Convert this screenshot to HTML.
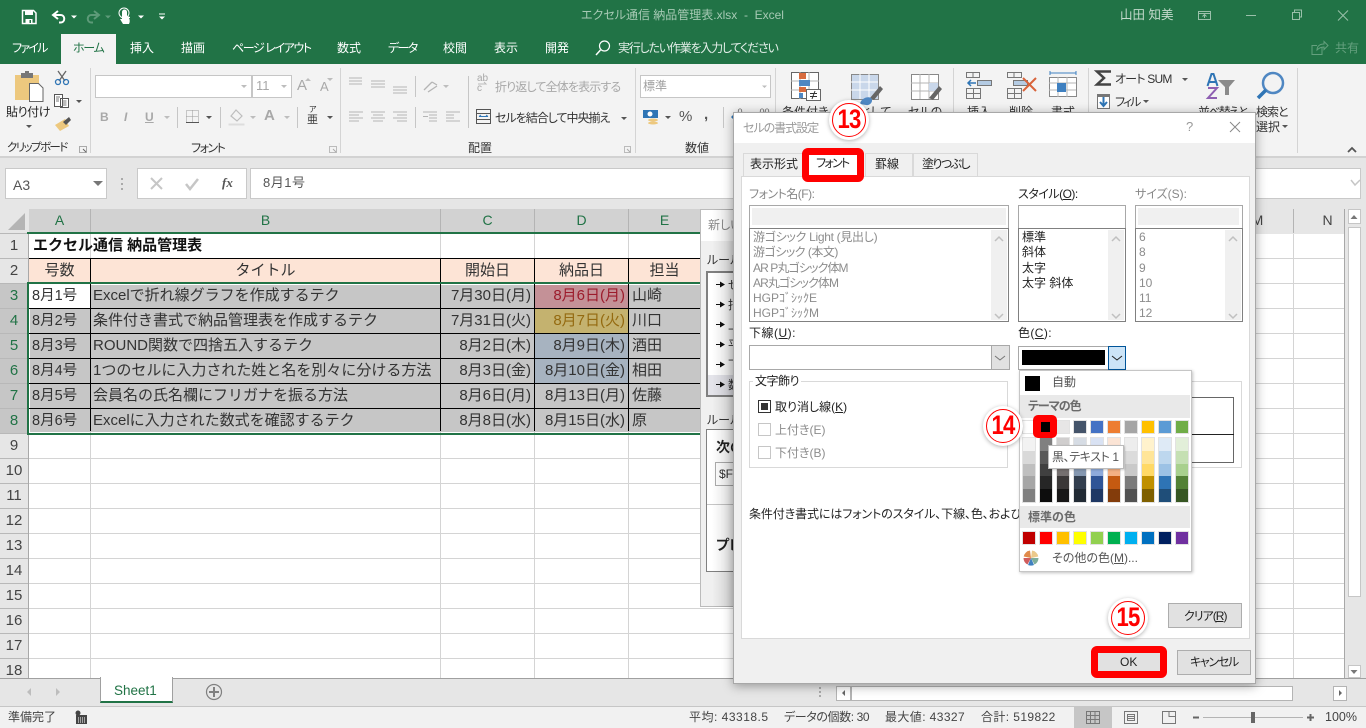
<!DOCTYPE html>
<html lang="ja"><head><meta charset="utf-8"><title>エクセル通信 納品管理表.xlsx - Excel</title>
<style>
*{box-sizing:border-box}
html,body{margin:0;padding:0;width:1366px;height:728px;overflow:hidden;background:#e6e6e6}
body{position:relative;font-family:"Liberation Sans","Noto Sans CJK JP",sans-serif;font-size:12px;color:#333;font-feature-settings:"palt"}
.a{position:absolute}
.t{position:absolute;white-space:nowrap;line-height:16px;height:16px}
.c{position:absolute;white-space:nowrap;line-height:24px;height:24px;font-size:15px;color:#333;font-feature-settings:normal}
.r{text-align:right}
.w{color:#fff}
.g{color:#8c8c8c}
.rn{position:absolute;left:0;width:28px;height:24px;line-height:24px;text-align:center;font-size:15px;color:#444;background:#e6e6e6}
.rs{background:#c6c6c6;color:#217346}
.ch{position:absolute;top:209px;height:24px;line-height:23px;text-align:center;font-size:14px;background:#d2d2d2;color:#217346;border-right:1px solid #b4b4b4}
.hl{position:absolute;background:#000;height:1px}
.vl{position:absolute;background:#000;width:1px}
.gv{position:absolute;width:1px;background:#d4d4d4}
.pal b{display:block;position:absolute;top:68px;width:12px;height:64px;outline:1px solid #e2e2e2}
.pal i{display:block;height:12.8px}
.pal u{display:block;position:absolute;width:12px;height:12px;outline:1px solid #e2e2e2}
.bd{position:absolute;width:34px;height:34px;border-radius:50%;border:1.5px solid #f00;color:#f00;font-weight:bold;font-size:27px;line-height:30px;text-align:center;letter-spacing:-1px}
.bd span{display:inline-block;transform:scaleX(.82)}
</style></head><body>

<!-- title bar + tabs -->
<div class="a" style="left:0;top:0;width:1366px;height:64px;background:#217346"></div>
<div class="a" style="left:61px;top:34px;width:55px;height:30px;background:#f3f3f3"></div>
<div class="t" style="left:581px;top:7px;font-size:12px;color:#a6c9b4">エクセル通信 納品管理表.xlsx&nbsp; -&nbsp; Excel</div>
<div class="t" style="left:1120px;top:7px;font-size:12.500px;color:#c3dacc">山田 知美</div>
<div class="t w" style="left:12px;top:40px;letter-spacing:-1.700px">ファイル</div>
<div class="t" style="left:73px;top:40px;color:#217346;letter-spacing:-1.300px">ホーム</div>
<div class="t w" style="left:130px;top:40px">挿入</div>
<div class="t w" style="left:181px;top:40px">描画</div>
<div class="t w" style="left:232px;top:40px;letter-spacing:-1.400px">ページ レイアウト</div>
<div class="t w" style="left:337px;top:40px">数式</div>
<div class="t w" style="left:388px;top:40px;letter-spacing:-1.600px">データ</div>
<div class="t w" style="left:443px;top:40px">校閲</div>
<div class="t w" style="left:494px;top:40px">表示</div>
<div class="t w" style="left:545px;top:40px">開発</div>
<div class="t" style="left:618px;top:40px;color:#e3eee8;letter-spacing:-1.200px">実行したい作業を入力してください</div>
<div class="t" style="left:1335px;top:40px;color:#64a07e">共有</div>

<!-- ribbon -->
<div class="a" style="left:0;top:64px;width:1366px;height:94px;background:#f3f3f3;border-bottom:2px solid #d2d2d2"></div>
<div class="a" style="left:95px;top:75px;width:157px;height:23px;background:#fff;border:1px solid #c6c6c6"></div>
<div class="a" style="left:252px;top:75px;width:40px;height:23px;background:#fff;border:1px solid #c6c6c6"></div>
<div class="t" style="left:256px;top:78px;color:#a8a8a8;font-size:13px">11</div>
<div class="a" style="left:640px;top:75px;width:131px;height:23px;background:#fff;border:1px solid #c6c6c6"></div>
<div class="t" style="left:643px;top:78px;color:#a0a0a0;font-size:12px">標準</div>
<div class="t" style="left:6px;top:104px;color:#222;font-size:12px;letter-spacing:-.4px">貼り付け</div>
<div class="t" style="left:7px;top:140px;color:#333;font-size:11.500px;letter-spacing:-1.600px">クリップボード</div>
<div class="t" style="left:191px;top:140px;color:#333;letter-spacing:-1.500px">フォント</div>
<div class="t" style="left:468px;top:140px;color:#333">配置</div>
<div class="t" style="left:685px;top:140px;color:#333">数値</div>
<div class="t" style="left:495px;top:79px;color:#a8a8a8;letter-spacing:-.850px">折り返して全体を表示する</div>
<div class="t" style="left:495px;top:110px;color:#333;letter-spacing:-1px">セルを結合して中央揃え</div>
<div class="t" style="left:782px;top:104px;color:#333">条件付き</div>
<div class="t" style="left:860px;top:104px;color:#333">として</div>
<div class="t" style="left:908px;top:104px;color:#333">セルの</div>
<div class="t" style="left:967px;top:104px;color:#333">挿入</div>
<div class="t" style="left:1009px;top:104px;color:#333">削除</div>
<div class="t" style="left:1051px;top:104px;color:#333">書式</div>
<div class="t" style="left:1115px;top:71px;color:#333;letter-spacing:-.800px">オート SUM</div>
<div class="t" style="left:1115px;top:94px;color:#333;letter-spacing:-2px">フィル</div>
<div class="t" style="left:1198px;top:104px;color:#333;letter-spacing:-1.800px">並べ替えと</div>
<div class="t" style="left:1256px;top:104px;color:#333;letter-spacing:-1px">検索と</div>
<div class="t" style="left:1256px;top:119px;color:#333">選択</div>
<div class="t" style="left:679px;top:109px;color:#555;font-size:15px">%</div>
<div class="t" style="left:704px;top:107px;color:#555;font-size:15px;font-weight:bold">,</div>
<div class="t" style="left:100px;top:109px;color:#a8a8a8;font-size:12px;font-weight:bold">B</div>
<div class="t" style="left:124px;top:109px;color:#a8a8a8;font-size:12px;font-style:italic;font-weight:bold">I</div>
<div class="t" style="left:145px;top:109px;color:#a8a8a8;font-size:12px;font-weight:bold;text-decoration:underline">U</div>
<div class="t" style="left:264px;top:108px;color:#a8a8a8;font-size:15px;font-weight:bold">A</div>
<div class="t" style="left:297px;top:78px;color:#a8a8a8;font-size:15px">A</div>
<div class="t" style="left:320px;top:79px;color:#a8a8a8;font-size:13px">A</div>
<div class="t" style="left:309px;top:106px;color:#333;font-size:8px;line-height:8px">ア</div>
<div class="t" style="left:307px;top:114px;color:#333;font-size:11px;line-height:12px">亜</div>
<div class="t" style="left:477px;top:74px;color:#a8a8a8;font-size:10px;line-height:10px">ab</div>
<div class="t" style="left:477px;top:84px;color:#a8a8a8;font-size:10px;line-height:10px">c</div>
<div class="t" style="left:735px;top:104px;color:#666;font-size:9px">.0</div>
<div class="t" style="left:757px;top:104px;color:#666;font-size:9px">.00</div>

<!-- formula bar -->
<div class="a" style="left:5px;top:168px;width:102px;height:31px;background:#fff;border:1px solid #c9c9c9"></div>
<div class="t" style="left:13px;top:177px;font-size:14px;color:#555">A3</div>
<div class="a" style="left:137px;top:168px;width:110px;height:31px;background:#fff;border:1px solid #c9c9c9"></div>
<div class="a" style="left:250px;top:168px;width:1111px;height:31px;background:#fff;border:1px solid #c9c9c9"></div>
<div class="t" style="left:263px;top:175px;font-size:13px;color:#555;font-feature-settings:normal;letter-spacing:.5px">8月1号</div>
<div class="t" style="left:222px;top:175px;font-size:13px;color:#555;font-family:'Liberation Serif',serif;font-style:italic;font-weight:bold">fx</div>

<!-- column headers -->
<div class="a" style="left:0;top:209px;width:29px;height:25px;background:#e6e6e6"></div>
<div class="ch" style="left:29px;width:62px">A</div>
<div class="ch" style="left:91px;width:350px">B</div>
<div class="ch" style="left:441px;width:94px">C</div>
<div class="ch" style="left:535px;width:94px">D</div>
<div class="ch" style="left:629px;width:72px">E</div>
<div class="ch" style="left:1222px;width:72px;background:#e6e6e6;color:#444">M</div>
<div class="ch" style="left:1294px;width:68px;background:#e6e6e6;color:#444">N</div>

<!-- row headers -->
<div class="rn" style="top:234px">1</div>
<div class="rn" style="top:259px">2</div>
<div class="rn rs" style="top:284px">3</div>
<div class="rn rs" style="top:309px">4</div>
<div class="rn rs" style="top:334px">5</div>
<div class="rn rs" style="top:359px">6</div>
<div class="rn rs" style="top:384px">7</div>
<div class="rn rs" style="top:409px">8</div>
<div class="rn" style="top:434px">9</div>
<div class="rn" style="top:459px">10</div>
<div class="rn" style="top:484px">11</div>
<div class="rn" style="top:509px">12</div>
<div class="rn" style="top:534px">13</div>
<div class="rn" style="top:559px">14</div>
<div class="rn" style="top:584px">15</div>
<div class="rn" style="top:609px">16</div>
<div class="rn" style="top:634px">17</div>
<div class="rn" style="top:659px">18</div>
<div class="a" style="left:0;top:233px;width:28px;height:445px;background:repeating-linear-gradient(to bottom,#b8b8b8 0,#b8b8b8 1px,transparent 1px,transparent 25px)"></div>

<!-- grid -->
<div class="a" style="left:28px;top:234px;width:1317px;height:444px;background:repeating-linear-gradient(to bottom,#fff 0,#fff 24px,#d4d4d4 24px,#d4d4d4 25px);border-left:1px solid #a8a8a8"></div>
<div class="gv" style="left:90px;top:234px;height:444px"></div>
<div class="gv" style="left:440px;top:234px;height:444px"></div>
<div class="gv" style="left:534px;top:234px;height:444px"></div>
<div class="gv" style="left:628px;top:234px;height:444px"></div>
<div class="gv" style="left:1293px;top:234px;height:444px"></div>
<div class="gv" style="left:1344px;top:209px;height:469px;background:#a8a8a8"></div>

<!-- header row + selection fills -->
<div class="a" style="left:29px;top:259px;width:672px;height:24px;background:#fde4d6"></div>
<div class="a" style="left:30px;top:285px;width:671px;height:147px;background:#c6c6c6"></div>
<div class="a" style="left:30px;top:285px;width:60px;height:23px;background:#fff"></div>
<div class="a" style="left:535px;top:285px;width:93px;height:23px;background:#c49197"></div>
<div class="a" style="left:535px;top:309px;width:93px;height:24px;background:#c4b26f"></div>
<div class="a" style="left:535px;top:334px;width:93px;height:49px;background:#a7b3c0"></div>
<div class="hl" style="left:29px;top:258px;width:672px"></div>
<div class="hl" style="left:29px;top:308px;width:672px"></div>
<div class="hl" style="left:29px;top:333px;width:672px"></div>
<div class="hl" style="left:29px;top:358px;width:672px"></div>
<div class="hl" style="left:29px;top:383px;width:672px"></div>
<div class="hl" style="left:29px;top:408px;width:672px"></div>
<div class="vl" style="left:90px;top:258px;height:173px"></div>
<div class="vl" style="left:440px;top:258px;height:173px"></div>
<div class="vl" style="left:534px;top:258px;height:173px"></div>
<div class="vl" style="left:628px;top:258px;height:173px"></div>
<div class="a" style="left:27px;top:232px;width:680px;height:2px;background:#217346"></div>
<div class="a" style="left:27px;top:282px;width:680px;height:2px;background:#217346"></div>
<div class="a" style="left:27px;top:433px;width:680px;height:2px;background:#217346"></div>
<div class="a" style="left:27px;top:282px;width:2px;height:153px;background:#217346"></div>

<!-- cell text -->
<div class="c" style="left:33px;top:234px;font-weight:bold;font-size:15px;color:#111">エクセル通信 納品管理表</div>
<div class="c" style="left:29px;width:61px;top:259px;text-align:center">号数</div>
<div class="c" style="left:91px;width:349px;top:259px;text-align:center">タイトル</div>
<div class="c" style="left:441px;width:93px;top:259px;text-align:center">開始日</div>
<div class="c" style="left:535px;width:93px;top:259px;text-align:center">納品日</div>
<div class="c" style="left:629px;width:71px;top:259px;text-align:center">担当</div>

<div class="c" style="left:32px;top:284px;font-size:14.500px">8月1号</div>
<div class="c" style="left:32px;top:309px;font-size:14.500px">8月2号</div>
<div class="c" style="left:32px;top:334px;font-size:14.500px">8月3号</div>
<div class="c" style="left:32px;top:359px;font-size:14.500px">8月4号</div>
<div class="c" style="left:32px;top:384px;font-size:14.500px">8月5号</div>
<div class="c" style="left:32px;top:409px;font-size:14.500px">8月6号</div>
<div class="c" style="left:93px;top:284px">Excelで折れ線グラフを作成するテク</div>
<div class="c" style="left:93px;top:309px">条件付き書式で納品管理表を作成するテク</div>
<div class="c" style="left:93px;top:334px">ROUND関数で四捨五入するテク</div>
<div class="c" style="left:93px;top:359px">1つのセルに入力された姓と名を別々に分ける方法</div>
<div class="c" style="left:93px;top:384px">会員名の氏名欄にフリガナを振る方法</div>
<div class="c" style="left:93px;top:409px">Excelに入力された数式を確認するテク</div>
<div class="c r" style="left:441px;width:90px;top:284px">7月30日(月)</div>
<div class="c r" style="left:441px;width:90px;top:309px">7月31日(火)</div>
<div class="c r" style="left:441px;width:90px;top:334px">8月2日(木)</div>
<div class="c r" style="left:441px;width:90px;top:359px">8月3日(金)</div>
<div class="c r" style="left:441px;width:90px;top:384px">8月6日(月)</div>
<div class="c r" style="left:441px;width:90px;top:409px">8月8日(水)</div>
<div class="c r" style="left:535px;width:90px;top:284px;color:#9c1c2c">8月6日(月)</div>
<div class="c r" style="left:535px;width:90px;top:309px;color:#946a10">8月7日(火)</div>
<div class="c r" style="left:535px;width:90px;top:334px">8月9日(木)</div>
<div class="c r" style="left:535px;width:90px;top:359px">8月10日(金)</div>
<div class="c r" style="left:535px;width:90px;top:384px">8月13日(月)</div>
<div class="c r" style="left:535px;width:90px;top:409px">8月15日(水)</div>
<div class="c" style="left:632px;top:284px">山崎</div>
<div class="c" style="left:632px;top:309px">川口</div>
<div class="c" style="left:632px;top:334px">酒田</div>
<div class="c" style="left:632px;top:359px">相田</div>
<div class="c" style="left:632px;top:384px">佐藤</div>
<div class="c" style="left:632px;top:409px">原</div>

<!-- vertical scrollbar -->
<div class="a" style="left:1345px;top:208px;width:21px;height:471px;background:#e6e6e6"></div>
<div class="a" style="left:1348px;top:227px;width:13px;height:370px;background:#fff;border:1px solid #c6c6c6"></div>
<div class="a" style="left:1348px;top:209px;width:13px;height:15px;background:#fff;border:1px solid #c6c6c6"></div>
<div class="a" style="left:1348px;top:665px;width:13px;height:13px;background:#fff;border:1px solid #c6c6c6"></div>

<!-- sheet tab bar -->
<div class="a" style="left:0;top:678px;width:1366px;height:29px;background:#e6e6e6;border-top:1px solid #a0a0a0"></div>
<div class="a" style="left:100px;top:678px;width:73px;height:25px;background:#fff;border:1px solid #a0a0a0;border-top:0;border-bottom:2px solid #217346"></div>
<div class="a" style="left:100px;top:677px;width:73px;height:2px;background:#fff;border-left:1px solid #a0a0a0;border-right:1px solid #a0a0a0"></div>
<div class="t" style="left:114px;top:683px;font-size:13.500px;color:#217346">Sheet1</div>
<div class="a" style="left:836px;top:686px;width:15px;height:15px;background:#fff;border:1px solid #b4b4b4"></div>
<div class="a" style="left:851px;top:686px;width:442px;height:15px;background:#fff;border:1px solid #b4b4b4"></div>
<div class="a" style="left:1333px;top:686px;width:14px;height:15px;background:#fff;border:1px solid #b4b4b4"></div>

<!-- status bar -->
<div class="a" style="left:0;top:706px;width:1366px;height:22px;background:#f1f1f1;border-top:1px solid #c6c6c6"></div>
<div class="a" style="left:1074px;top:707px;width:38px;height:21px;background:#c6c6c6"></div>
<div class="t" style="left:8px;top:709px;color:#444">準備完了</div>
<div class="t" style="left:689px;top:709px;color:#444;letter-spacing:.5px">平均: 43318.5</div>
<div class="t" style="left:784px;top:709px;color:#444;letter-spacing:-.4px">データの個数: 30</div>
<div class="t" style="left:885px;top:709px;color:#444;letter-spacing:.4px">最大値: 43327</div>
<div class="t" style="left:981px;top:709px;color:#444;letter-spacing:.4px">合計: 519822</div>
<div class="t" style="left:1325px;top:709px;color:#444;font-size:12.500px">100%</div>

<!-- all icons under the dialogs -->
<svg class="a" style="left:0;top:0" width="1366" height="728" viewBox="0 0 1366 728" fill="none">
<!-- QAT -->
<path d="M22.500 10.500h11l2.500 2.500v10.500h-13.500z" stroke="#fff" stroke-width="1.500"/><path d="M25 11h8v4h-8zM25.500 19h7v4.500h-7z" fill="#fff"/><path d="M29.500 20h1.500v3h-1.500z" fill="#217346"/>
<path d="M58 11l-5 4 5 4M53.500 15h7c5 0 5 7.500 0 7.500h-1.500" stroke="#fff" stroke-width="2"/>
<path d="M71 15.500h6l-3 3z" fill="#fff"/>
<path d="M94 11l5 4-5 4M98.500 15h-7c-5 0-5 7.500 0 7.500h1.500" stroke="#5d9a78" stroke-width="2"/>
<path d="M105 15.500h6l-3 3z" fill="#5d9a78"/>
<path d="M122 19v-7a2.500 2.500 0 0 1 5 0v4l3 1v1l-1 0c1 2 1 4 0 6h-6l-3-5z" fill="#fff"/><circle cx="124" cy="13" r="5" stroke="#fff"/>
<path d="M138 15.500h6l-3 3z" fill="#fff"/>
<path d="M159 14h6" stroke="#fff"/><path d="M159 16.500h6l-3 3z" fill="#fff"/>
<!-- window buttons -->
<path d="M1198.500 11.500h12v8h-12zM1198.500 13.500h12M1204.500 18v-3M1202.500 16.500l2-2 2 2" stroke="#9ac0aa"/>
<path d="M1246 15.500h10" stroke="#9ac0aa"/>
<path d="M1292.500 12.500h7v7h-7zM1294.500 12v-2h7v7h-2" stroke="#9ac0aa"/>
<path d="M1338 10.500l10 10M1348 10.500l-10 10" stroke="#9ac0aa"/>
<!-- search + share -->
<circle cx="604.500" cy="46" r="5" stroke="#fff" stroke-width="1.200"/><path d="M600.500 50l-4.500 5" stroke="#fff" stroke-width="1.500"/>
<path d="M1322 47.500v7h-10v-9h5M1317 50c0-4 3-6 7-6v-2.500l4 4-4 4v-2.500c-3 0-5 1-7 3z" stroke="#64a07e"/>
<!-- separators -->
<path d="M90.500 68v85M340.500 68v85M635.500 68v85M775.500 68v85M953.500 68v85M1088.500 68v85M1297.500 68v85" stroke="#d4d4d4"/>
<path d="M177.500 107v21M220.500 107v21M297.500 107v21M415.500 76v21M415.500 107v21M468.500 76v52M723.500 107v21" stroke="#c6c6c6"/>
<!-- clipboard -->
<path d="M15 75h24v25H15z" fill="#edc87e"/><path d="M21 73h12v5H21z" fill="#777"/><path d="M25 71h4v3h-4z" fill="#777"/>
<path d="M29.500 83.500h9l4.500 4.500v13.500H29.500z" fill="#fff" stroke="#666"/>
<!-- cut -->
<path d="M58 71l7 10M66 71l-7 10" stroke="#666" stroke-width="1.300"/><circle cx="58" cy="82" r="2.500" stroke="#2f75b5" stroke-width="1.300"/><circle cx="66" cy="82" r="2.500" stroke="#2f75b5" stroke-width="1.300"/>
<!-- copy -->
<path d="M54.500 94.500h8v12h-8zM60.500 98.500h8v9h-8z" fill="#fff" stroke="#555"/><path d="M62.500 101h4M62.500 103h4M62.500 105h4M56 97h4M56 99h3M56 101h3" stroke="#7a7a7a"/>
<path d="M76 100h6l-3 3z" fill="#555"/>
<!-- brush -->
<path d="M55 125l10-6 4 7-9 5z" fill="#edc87e"/><path d="M63 122l6-5 2 3-5 5z" fill="#555"/>
<path d="M26 125h6l-3 3z" fill="#555"/>
<!-- launchers -->
<path d="M79.500 146.500h7v6h-7z" stroke="#aaa"/><path d="M83 149l3 3" stroke="#666"/>
<path d="M329.500 146.500h7v6h-7z" stroke="#bbb"/><path d="M333 149l3 3" stroke="#aaa"/>
<path d="M624.500 146.500h6v6h-6z" stroke="#bbb"/><path d="M627 149l3 3" stroke="#aaa"/>
<!-- font group carets etc -->
<path d="M241 85h6l-3 3zM281 85h6l-3 3zM762 85.500h5l-2.500 2.500z" fill="#bdbdbd"/>
<path d="M305 81l3-3 3 3zM327 78l3 3 3-3z" fill="#bdbdbd"/>
<path d="M164 116h6l-3 3zM250 116h6l-3 3zM284 116h6l-3 3zM443 85h6l-3 3z" fill="#bdbdbd"/>
<path d="M206 116h6l-3 3zM327 116h6l-3 3zM621 117h6l-3 3zM665 116h6l-3 3z" fill="#555"/>
<path d="M186.500 110.500h12v12h-12zM192.500 110.500v12M186.500 116.500h12" stroke="#999" stroke-dasharray="1 1"/><path d="M186 122.500h13" stroke="#555"/>
<path d="M229 124h15v1H229z" fill="#ddd" stroke="#ddd"/><path d="M231 116l5-6 6 6-5 5z" stroke="#bdbdbd" stroke-width="1.200"/>
<!-- alignment -->
<path d="M349 78h13M349 81h13M349 84h13M371 81h14M371 84h14M371 87h14M393 87h14M393 90h14M393 93h14" stroke="#b4b4b4"/>
<path d="M349 112h14M349 115h10M349 118h14M349 121h10M371 112h14M373 115h10M371 118h14M373 121h10M393 112h14M397 115h10M393 118h14M397 121h10" stroke="#b4b4b4"/>
<path d="M423 112h14M429 115h8M429 118h8M429 121h8M423 116.500h5" stroke="#b4b4b4"/>
<path d="M446 112h14M446 115h8M446 118h8M446 121h14" stroke="#b4b4b4"/>
<path d="M424 90l8-8M432 82l5 3M428 92l9-6" stroke="#b4b4b4" stroke-width="1.300"/>
<path d="M478 84h8l-2-2" stroke="#bbb"/>
<!-- merge -->
<path d="M476.500 109.500h14v14h-14zM476.500 113.500h14M476.500 119.500h14" stroke="#555"/><path d="M479 116.500h9M479 116.500l2-1.500M488 116.500l-2-1.500" stroke="#2f75b5"/>
<!-- currency -->
<path d="M643 110h15v8h-15z" fill="#2f75b5"/><circle cx="650" cy="114" r="2.500" fill="#fff"/><ellipse cx="653" cy="120" rx="5" ry="1.500" fill="#edc87e"/><ellipse cx="653" cy="123" rx="5" ry="1.500" fill="#edc87e"/>
<path d="M731 117l3-3v6zM756 117l3-3v6z" fill="#2f75b5"/>
<!-- cond fmt -->
<path d="M791.500 72.500h27v26h-27z" fill="#fff" stroke="#666"/><path d="M791 81h28M791 90h28M800 72v27M809 72v27" stroke="#b4b4b4"/>
<path d="M799 73h7v6h-7z" fill="#d86b3e"/><path d="M799 80h11v6h-11z" fill="#4f87c2"/><path d="M799 87h7v5h-7z" fill="#d86b3e"/><path d="M799 93h4v5h-4z" fill="#4f87c2"/>
<path d="M806.500 89.500h14v11h-14z" fill="#fff" stroke="#666"/><path d="M810 93.500h7M810 96.500h7M815 91l-3 8" stroke="#333"/>
<!-- table fmt -->
<path d="M851.500 74.500h27v25h-27z" fill="#c9d7ea" stroke="#888"/><path d="M851 82h27M851 90h27M860 74v25M869 74v25" stroke="#fff"/>
<path d="M870 98l10-12 3 3-9 11z" fill="#666"/><path d="M860 104c1-6 8-8 11-6 3 3-1 8-5 7z" fill="#4f87c2"/>
<!-- cell style -->
<path d="M911.500 74.500h27v25h-27z" fill="#fff" stroke="#888"/><path d="M911 83h27M911 91h27M920 74v25M929 74v25" stroke="#b4b4b4"/><path d="M929 83h9v8h-9z" fill="#c9d7ea"/>
<path d="M929 98l10-12 3 3-9 11z" fill="#666"/>
<!-- insert -->
<path d="M966.500 72.500h13v5h-13zM973 72v6M966.500 88.500h14v10h-14zM973.500 88v11M966 93.500h15" stroke="#777"/>
<path d="M977.500 80.500h14v5h-14z" fill="#b4cbe3" stroke="#777"/><path d="M968 83h8M971 80l-3 3 3 3" stroke="#2f75b5" stroke-width="1.500"/>
<!-- delete -->
<path d="M1007.500 72.500h14v5h-14zM1014 72v6M1007.500 88.500h14v10h-14zM1014.500 88v11M1007 93.500h15" stroke="#777"/>
<path d="M1013.500 80.500h14v5h-14z" fill="#b4cbe3" stroke="#777"/><path d="M1023 78l13 13M1036 78l-13 13" stroke="#d8633a" stroke-width="2"/>
<!-- format -->
<path d="M1049.500 77.500h27v19h-27z" fill="#fff" stroke="#888"/><path d="M1049 83h27M1049 90h27M1058 77v20M1067 77v20" stroke="#b4b4b4"/>
<path d="M1057 83h9v9h-9z" fill="#3f80c0"/><path d="M1050 73h26M1050 71v4M1076 71v4" stroke="#3f80c0"/>
<!-- sigma -->
<path d="M1111 71.500h-14l7 6.500-7 6.500h14" stroke="#444" stroke-width="2.500"/>
<path d="M1182 78h6l-3 3zM1143 100h6l-3 3z" fill="#555"/>
<path d="M1097.500 95.500h12v13h-12z" fill="#fff" stroke="#777"/><path d="M1097 94h13v3h-13z" fill="#777"/><path d="M1103.500 97v8M1100 102l3.500 4 3.500-4" stroke="#2f75b5" stroke-width="2"/>
<!-- sort -->
<path d="M1207.500 86l4-12h2l4 12M1209.500 82h6" stroke="#2f75b5" stroke-width="2"/>
<path d="M1208 88h9l-9 10h9" stroke="#8e5fb2" stroke-width="2"/>
<path d="M1218 80h17l-6 7v8h-4v-8z" fill="#8a8a8a"/>
<!-- find -->
<circle cx="1273" cy="83" r="10" stroke="#4f87c2" stroke-width="2.500"/><path d="M1266 90l-8 8" stroke="#2f75b5" stroke-width="3.500"/>
<path d="M1282 125h6l-3 3z" fill="#555"/>
<path d="M1348 152l4-4 4 4" stroke="#555" stroke-width="1.800"/>
<!-- formula bar bits -->
<path d="M93 181h10l-5 5z" fill="#777"/>
<path d="M122 178v2M122 183v2M122 188v2" stroke="#aaa" stroke-width="2"/>
<path d="M151 178l11 11M162 178l-11 11" stroke="#c6c6c6" stroke-width="2"/>
<path d="M186 184l4 5 8-10" stroke="#c6c6c6" stroke-width="2.500"/>
<path d="M1351 180l4 5 5-5" stroke="#c6c6c6" stroke-width="1.500"/>
<!-- corner -->
<path d="M25 213v17H8z" fill="#b4b4b4"/>
<!-- scroll arrows -->
<path d="M1350.500 219l3.500-4 3.500 4z" fill="#777"/><path d="M1350.500 670h7l-3.500 4z" fill="#777"/>
<!-- sheet bar -->
<path d="M31 688v8l-4-4z" fill="#bdbdbd"/><path d="M56 688v8l4-4z" fill="#bdbdbd"/>
<circle cx="214" cy="692" r="7.500" stroke="#808080" stroke-width="1.200"/><path d="M209 692h10M214 687v10" stroke="#808080" stroke-width="2"/>
<path d="M820 687v2M820 691v2M820 695v2" stroke="#aaa" stroke-width="2"/>
<path d="M845 690v6l-3-3zM1339 690v6l3-3z" fill="#666"/>
<!-- status -->
<circle cx="78" cy="713" r="2.500" fill="#444"/><path d="M76 715h11v9H76z" fill="#444"/><path d="M78 718h7M78 720h7M78 722h7" stroke="#fff" stroke-dasharray="1 1"/>
<path d="M1086.500 711.500h13v12h-13zM1090.500 711v13M1095 711v13M1086 715.500h14M1086 719.500h14" stroke="#777"/>
<path d="M1124.500 711.500h13v12h-13zM1127.500 714.500h7v6h-7zM1128 716.500h6M1128 718.500h6" stroke="#777"/>
<path d="M1162.500 711.500h13v12h-13zM1169 711v6M1169 716.500h6" stroke="#777"/>
<path d="M1193 717.500h6M1307 717.500h7M1310.500 714v7" stroke="#666" stroke-width="2"/>
<path d="M1203 717.500h100" stroke="#b4b4b4"/><path d="M1251 712h4v11h-4z" fill="#666"/>
</svg>

<!-- back dialog -->
<div class="a" style="left:700px;top:209px;width:40px;height:398px;background:#f0f0f0;border:1px solid #bbb;overflow:hidden">
 <div class="a" style="left:0;top:0;width:40px;height:31px;background:#fff"></div>
 <div class="t g" style="left:7px;top:7px">新しい</div>
 <div class="t" style="left:6px;top:42px">ルール</div>
 <div class="a" style="left:5px;top:61px;width:40px;height:126px;background:#fff;border:2px solid #808080"></div>
 <div class="a" style="left:7px;top:165px;width:40px;height:20px;background:#e4e4ea"></div>
 <svg class="a" style="left:0;top:0" width="40" height="200" fill="#111"><path d="M15 74h4v-2.500l5 3-5 3v-2.500h-4zM15 94h4v-2.500l5 3-5 3v-2.500h-4zM15 114h4v-2.500l5 3-5 3v-2.500h-4zM15 134h4v-2.500l5 3-5 3v-2.500h-4zM15 154h4v-2.500l5 3-5 3v-2.500h-4zM15 174h4v-2.500l5 3-5 3v-2.500h-4z"/></svg>
 <div class="t" style="left:27px;top:67px">せ</div>
 <div class="t" style="left:27px;top:87px">指</div>
 <div class="t" style="left:27px;top:107px">上</div>
 <div class="t" style="left:27px;top:127px">平</div>
 <div class="t" style="left:27px;top:147px">下</div>
 <div class="t" style="left:27px;top:167px">数</div>
 <div class="t" style="left:6px;top:202px">ルール</div>
 <div class="a" style="left:5px;top:219px;width:40px;height:143px;background:#fff;border:1px solid #808080"></div>
 <div class="t" style="left:15px;top:229px;font-weight:bold;color:#222;font-size:14px">次の</div>
 <div class="a" style="left:14px;top:252px;width:40px;height:24px;background:#fff;border:1px solid #adadad"></div>
 <div class="t" style="left:18px;top:256px;color:#333">$F</div>
 <div class="a" style="left:6px;top:294px;width:40px;height:1px;background:#c6c6c6"></div>
 <div class="t" style="left:15px;top:327px;font-weight:bold;color:#222;font-size:14px">プレ</div>
</div>
<div class="a" style="left:712px;top:209px;width:22px;height:398px;background:linear-gradient(to right,rgba(0,0,0,0),rgba(0,0,0,.14))"></div>

<!-- main dialog -->
<div class="a" style="left:733px;top:112px;width:523px;height:572px;background:#f0f0f0;border:1px solid #a8a8a8;box-shadow:0 2px 10px rgba(0,0,0,.35)"></div>
<div class="a" style="left:734px;top:113px;width:521px;height:30px;background:#fff"></div>
<div class="t" style="left:743px;top:120px;color:#9a9a9a;letter-spacing:-1px">セルの書式設定</div>
<div class="t" style="left:1186px;top:119px;color:#999;font-size:13px">?</div>
<svg class="a" style="left:1225px;top:117px" width="20" height="20" fill="none"><path d="M5 5l10 10M15 5L5 15" stroke="#888"/></svg>

<!-- tabs -->
<div class="a" style="left:743px;top:153px;width:60px;height:24px;border:1px solid #d9d9d9;background:#f0f0f0"></div>
<div class="a" style="left:865px;top:153px;width:48px;height:24px;border:1px solid #d9d9d9;background:#f0f0f0"></div>
<div class="a" style="left:913px;top:153px;width:65px;height:24px;border:1px solid #d9d9d9;background:#f0f0f0"></div>
<div class="t" style="left:750px;top:156px;color:#222">表示形式</div>
<div class="t" style="left:875px;top:156px;color:#222">罫線</div>
<div class="t" style="left:922px;top:156px;color:#222;letter-spacing:-1.600px">塗りつぶし</div>
<!-- panel -->
<div class="a" style="left:741px;top:176px;width:509px;height:463px;background:#fff;border:1px solid #d9d9d9"></div>
<div class="a" style="left:802px;top:148px;width:62px;height:34px;background:#fff;border:7px solid #f00;border-radius:6px"></div>
<div class="t" style="left:816px;top:155px;color:#222;letter-spacing:-1.700px">フォント</div>

<div class="t" style="left:749px;top:186px;color:#888;letter-spacing:-.5px">フォント名(F):</div>
<div class="t" style="left:1018px;top:186px;color:#222;letter-spacing:-.5px">スタイル(<u>O</u>):</div>
<div class="t" style="left:1135px;top:186px;color:#888">サイズ(S):</div>
<!-- inputs -->
<div class="a" style="left:749px;top:205px;width:260px;height:24px;background:#fff;border:1px solid #a8a8a8"></div>
<div class="a" style="left:752px;top:208px;width:254px;height:17px;background:#f0f0f0"></div>
<div class="a" style="left:1018px;top:205px;width:108px;height:24px;background:#fff;border:1px solid #a8a8a8"></div>
<div class="a" style="left:1135px;top:205px;width:108px;height:24px;background:#fff;border:1px solid #a8a8a8"></div>
<div class="a" style="left:1138px;top:208px;width:101px;height:17px;background:#f0f0f0"></div>
<!-- lists -->
<div class="a" style="left:749px;top:228px;width:260px;height:94px;background:#fff;border:1px solid #808080"></div>
<div class="a" style="left:991px;top:230px;width:16px;height:90px;background:#f0f0f0"></div>
<div class="a" style="left:1018px;top:228px;width:108px;height:94px;background:#fff;border:1px solid #808080"></div>
<div class="a" style="left:1108px;top:230px;width:16px;height:90px;background:#f0f0f0"></div>
<div class="a" style="left:1135px;top:228px;width:108px;height:94px;background:#fff;border:1px solid #808080"></div>
<div class="a" style="left:1225px;top:230px;width:16px;height:90px;background:#f0f0f0"></div>
<div class="t g" style="left:753px;top:229px;letter-spacing:-.3px">游ゴシック Light (見出し)</div>
<div class="t g" style="left:753px;top:244px;letter-spacing:-.5px">游ゴシック (本文)</div>
<div class="t g" style="left:753px;top:260px;letter-spacing:-.9px">AR P丸ゴシック体M</div>
<div class="t g" style="left:753px;top:275px;letter-spacing:-.9px">AR丸ゴシック体M</div>
<div class="t g" style="left:753px;top:290px">HGPｺﾞｼｯｸE</div>
<div class="t g" style="left:753px;top:305px">HGPｺﾞｼｯｸM</div>
<div class="t" style="left:1022px;top:229px;color:#222">標準</div>
<div class="t" style="left:1022px;top:244px;color:#222">斜体</div>
<div class="t" style="left:1022px;top:260px;color:#222">太字</div>
<div class="t" style="left:1022px;top:275px;color:#222">太字 斜体</div>
<div class="t g" style="left:1139px;top:229px">6</div>
<div class="t g" style="left:1139px;top:244px">8</div>
<div class="t g" style="left:1139px;top:260px">9</div>
<div class="t g" style="left:1139px;top:275px">10</div>
<div class="t g" style="left:1139px;top:290px">11</div>
<div class="t g" style="left:1139px;top:305px">12</div>
<!-- underline + color -->
<div class="t" style="left:749px;top:325px;color:#222;letter-spacing:.5px">下線(<u>U</u>):</div>
<div class="t" style="left:1018px;top:325px;color:#222;letter-spacing:.4px">色(<u>C</u>):</div>
<div class="a" style="left:749px;top:345px;width:261px;height:25px;background:#fff;border:1px solid #a8a8a8"></div>
<div class="a" style="left:991px;top:346px;width:18px;height:23px;background:#e1e1e1;border-left:1px solid #a8a8a8"></div>
<div class="a" style="left:1018px;top:346px;width:108px;height:24px;background:#fff;border:1px solid #a8a8a8"></div>
<div class="a" style="left:1022px;top:350px;width:83px;height:15px;background:#000"></div>
<div class="a" style="left:1108px;top:346px;width:18px;height:24px;background:#cce4f7;border:1px solid #005499"></div>
<!-- effects group -->
<div class="a" style="left:749px;top:381px;width:259px;height:87px;border:1px solid #d9d9d9"></div>
<div class="t" style="left:753px;top:373px;color:#222;background:#fff;padding:0 2px;letter-spacing:-.5px">文字飾り</div>
<div class="a" style="left:758px;top:400px;width:13px;height:13px;background:#fff;border:1px solid #333"></div>
<div class="a" style="left:761px;top:403px;width:7px;height:7px;background:#333"></div>
<div class="t" style="left:775px;top:399px;color:#222">取り消し線(<u>K</u>)</div>
<div class="a" style="left:758px;top:423px;width:13px;height:13px;border:1px solid #c6c6c6"></div>
<div class="t g" style="left:775px;top:422px">上付き(E)</div>
<div class="a" style="left:758px;top:446px;width:13px;height:13px;border:1px solid #c6c6c6"></div>
<div class="t g" style="left:775px;top:445px">下付き(B)</div>
<div class="t" style="left:749px;top:506px;color:#222;letter-spacing:-.1px">条件付き書式にはフォントのスタイル、下線、色、および取</div>
<!-- preview -->
<div class="a" style="left:1027px;top:381px;width:215px;height:87px;border:1px solid #d9d9d9"></div>
<div class="a" style="left:1100px;top:397px;width:134px;height:66px;border:1px solid #666"></div>
<div class="a" style="left:1190px;top:434px;width:44px;height:1px;background:#222"></div>
<!-- buttons -->
<div class="a" style="left:1168px;top:603px;width:74px;height:25px;background:#e1e1e1;border:1px solid #adadad"></div>
<div class="t" style="left:1184px;top:608px;color:#222;letter-spacing:-1px">クリア(<u>R</u>)</div>
<div class="a" style="left:1177px;top:650px;width:74px;height:25px;background:#e1e1e1;border:1px solid #adadad"></div>
<div class="t" style="left:1190px;top:654px;color:#222;letter-spacing:-1.300px">キャンセル</div>
<div class="a" style="left:1091px;top:646px;width:76px;height:32px;background:#e1e1e1;border:7px solid #f00;border-radius:6px"></div>
<div class="t" style="left:1120px;top:654px;color:#222">OK</div>

<!-- dialog glyphs -->
<svg class="a" style="left:0;top:0" width="1366" height="728" viewBox="0 0 1366 728" fill="none">
<path d="M995 241l4-4 4 4M995 314l4 4 4-4M1112 241l4-4 4 4M1112 314l4 4 4-4M1229 241l4-4 4 4M1229 314l4 4 4-4" stroke="#c0c0c0" stroke-width="1.500"/>
<path d="M995 356l5 4 5-4" stroke="#777"/><path d="M1112 356l5 4 5-4" stroke="#222"/>
</svg>

<!-- colour popup -->
<div class="a" style="left:1019px;top:370px;width:173px;height:202px;background:#fff;border:1px solid #c6c6c6;box-shadow:1px 1px 3px rgba(0,0,0,.25)"></div>
<div class="a" style="left:1025px;top:376px;width:15px;height:15px;background:#000"></div>
<div class="t" style="left:1052px;top:374px;color:#555">自動</div>
<div class="a" style="left:1020px;top:395px;width:170px;height:23px;background:#e9e9e9"></div>
<div class="t" style="left:1028px;top:398px;color:#6b6b6b;font-weight:bold;letter-spacing:-1px">テーマの色</div>
<div class="a" style="left:1020px;top:506px;width:170px;height:22px;background:#e9e9e9"></div>
<div class="t" style="left:1028px;top:509px;color:#6b6b6b;font-weight:bold">標準の色</div>
<div class="a pal" style="left:1023px;top:370px;width:170px;height:180px">
<u style="left:0;top:51px;background:#fff"></u><u style="left:34px;top:51px;background:#e7e6e6"></u><u style="left:51px;top:51px;background:#44546a"></u><u style="left:68px;top:51px;background:#4472c4"></u><u style="left:85px;top:51px;background:#ed7d31"></u><u style="left:102px;top:51px;background:#a5a5a5"></u><u style="left:119px;top:51px;background:#ffc000"></u><u style="left:136px;top:51px;background:#5b9bd5"></u><u style="left:153px;top:51px;background:#70ad47"></u>
<b style="left:0"><i style="background:#f2f2f2"></i><i style="background:#d9d9d9"></i><i style="background:#bfbfbf"></i><i style="background:#a6a6a6"></i><i style="background:#808080"></i></b>
<b style="left:17px"><i style="background:#808080"></i><i style="background:#595959"></i><i style="background:#404040"></i><i style="background:#262626"></i><i style="background:#0d0d0d"></i></b>
<b style="left:34px"><i style="background:#d0cece"></i><i style="background:#afabab"></i><i style="background:#757070"></i><i style="background:#3b3838"></i><i style="background:#181717"></i></b>
<b style="left:51px"><i style="background:#d6dce4"></i><i style="background:#adb9ca"></i><i style="background:#8497b0"></i><i style="background:#333f4f"></i><i style="background:#222b35"></i></b>
<b style="left:68px"><i style="background:#d9e2f3"></i><i style="background:#b4c6e7"></i><i style="background:#8eaadb"></i><i style="background:#2f5496"></i><i style="background:#1f3864"></i></b>
<b style="left:85px"><i style="background:#fbe4d5"></i><i style="background:#f7caac"></i><i style="background:#f4b083"></i><i style="background:#c55a11"></i><i style="background:#833c0b"></i></b>
<b style="left:102px"><i style="background:#ededed"></i><i style="background:#dbdbdb"></i><i style="background:#c9c9c9"></i><i style="background:#7b7b7b"></i><i style="background:#525252"></i></b>
<b style="left:119px"><i style="background:#fff2cc"></i><i style="background:#ffe598"></i><i style="background:#ffd965"></i><i style="background:#bf9000"></i><i style="background:#7f6000"></i></b>
<b style="left:136px"><i style="background:#deeaf6"></i><i style="background:#bdd7ee"></i><i style="background:#9cc2e5"></i><i style="background:#2e74b5"></i><i style="background:#1f4e79"></i></b>
<b style="left:153px"><i style="background:#e2efd9"></i><i style="background:#c5e0b3"></i><i style="background:#a8d08d"></i><i style="background:#538135"></i><i style="background:#375623"></i></b>
<u style="left:0;top:162px;background:#c00000"></u><u style="left:17px;top:162px;background:#f00"></u><u style="left:34px;top:162px;background:#ffc000"></u><u style="left:51px;top:162px;background:#ff0"></u><u style="left:68px;top:162px;background:#92d050"></u><u style="left:85px;top:162px;background:#00b050"></u><u style="left:102px;top:162px;background:#00b0f0"></u><u style="left:119px;top:162px;background:#0070c0"></u><u style="left:136px;top:162px;background:#002060"></u><u style="left:153px;top:162px;background:#7030a0"></u>
</div>
<svg class="a" style="left:1023px;top:550px" width="16" height="16" viewBox="-8 -8 16 16"><path d="M0 0L-1 -7.500A7.500 7.500 0 0 0 -7.300 -1.500z" fill="#e08a4a"/><path d="M0 0L1 -7.500A7.500 7.500 0 0 1 7.300 -1.500z" fill="#ecc98a"/><path d="M0 0L7.500 0A7.500 7.500 0 0 1 3.500 6.500z" fill="#7fae9a"/><path d="M0 0L3 7A7.500 7.500 0 0 1 -3 7z" fill="#3f80c0"/><path d="M0 0L-3.500 6.500A7.500 7.500 0 0 1 -7.500 0z" fill="#d05c5c"/></svg>
<div class="t" style="left:1052px;top:550px;color:#555">その他の色(<u>M</u>)...</div>

<!-- red marker for black swatch -->
<div class="a" style="left:1033px;top:415px;width:24px;height:23px;background:#f00;border-radius:5px"></div>
<div class="a" style="left:1041px;top:422px;width:9px;height:10px;background:#000"></div>
<!-- tooltip -->
<div class="a" style="left:1048px;top:445px;width:76px;height:24px;background:#fff;border:1px solid #bbb;box-shadow:1px 1px 2px rgba(0,0,0,.2)"></div>
<div class="t" style="left:1052px;top:449px;color:#555;letter-spacing:-.4px">黒、テキスト 1</div>

<!-- number badges -->
<div class="a" style="left:829px;top:100px;width:40px;height:40px;border-radius:50%;background:#fff;box-shadow:0 1px 4px rgba(0,0,0,.3)"></div>
<div class="bd" style="left:832px;top:103px"><span>13</span></div>
<div class="a" style="left:983px;top:406px;width:40px;height:40px;border-radius:50%;background:#fff;box-shadow:0 1px 4px rgba(0,0,0,.3)"></div>
<div class="bd" style="left:986px;top:409px"><span>14</span></div>
<div class="a" style="left:1108px;top:598px;width:40px;height:40px;border-radius:50%;background:#fff;box-shadow:0 1px 4px rgba(0,0,0,.3)"></div>
<div class="bd" style="left:1111px;top:601px"><span>15</span></div>
</body></html>
